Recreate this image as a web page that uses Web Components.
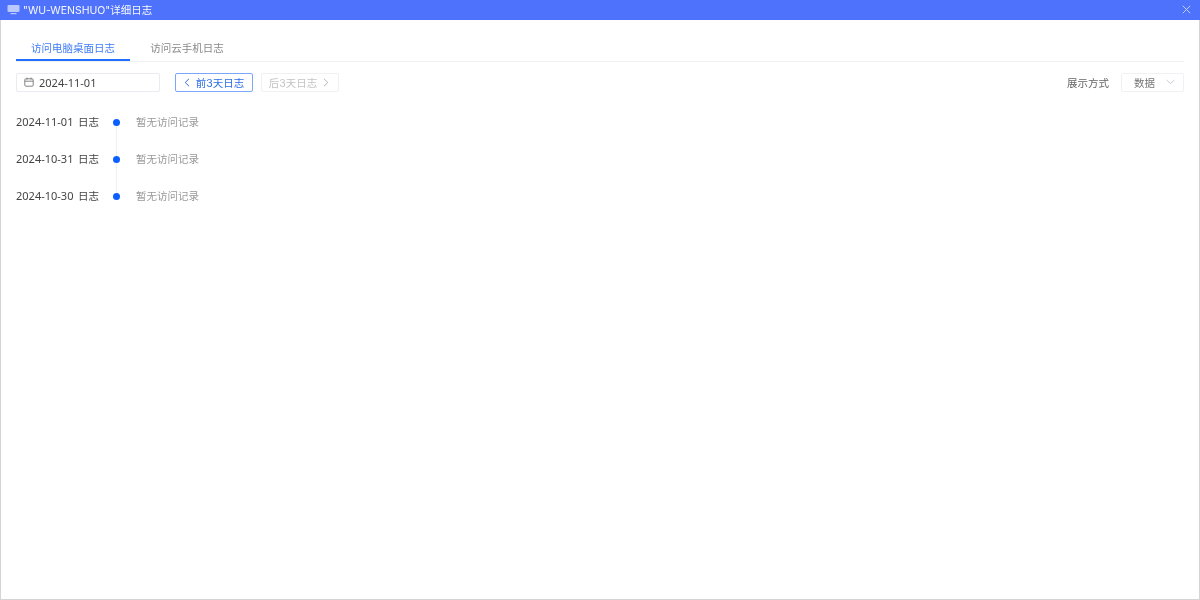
<!DOCTYPE html>
<html lang="zh"><head><meta charset="utf-8">
<style>
html,body{margin:0;height:100%;background:#fff}
body{font-family:Inter,"Noto Sans CJK SC",sans-serif;font-size:10.5px;overflow:hidden}
</style></head><body>
<log-window></log-window>
<template id="t-window"><style>
:host{display:flex;flex-direction:column;width:1200px;height:600px;box-sizing:border-box;border:1px solid #d4d4d4;border-top:0;background:#fff;color:#333;filter:blur(.3px)}
main{flex:1;display:flex;flex-direction:column;padding:20px 15px 0}
</style>
<title-bar></title-bar>
<main>
<log-tabs></log-tabs>
<log-toolbar></log-toolbar>
<log-timeline></log-timeline>
</main></template>

<template id="t-title"><style>
:host{display:flex;align-items:center;height:20px;box-sizing:border-box;padding:0 9px 1px 7px;background:#4f72fd;color:#fff;margin:0 -1px;font-size:10.5px;gap:3px;flex:none}
span{flex:1;opacity:.95}
svg{display:block}
</style>
<svg width="13" height="11" viewBox="0 0 13 11"><rect x="0.5" y="1" width="12" height="7" rx="1" fill="#b9c8ff"/><rect x="3.5" y="9" width="6" height="1.2" fill="#b9c8ff"/></svg>
<span>"WU-WENSHUO"详细日志</span>
<svg width="9" height="9" viewBox="0 0 9 9" fill="none" stroke="#cfd9ff" stroke-width=".9"><path d="M.8.8l7.4 7.4M8.2.8L.8 8.2"/></svg></template>

<template id="t-tabs"><style>
:host{display:flex;height:21px;border-bottom:1px solid #f0f1f4;flex:none;gap:20px}
div{width:114px;text-align:center;line-height:18px;height:20px;color:#8a8a8a;box-sizing:border-box}
.a{color:#3f7cf6;border-bottom:2px solid #1f6fff;height:21px}
.b{width:74px;white-space:nowrap}
</style><div class="a">访问电脑桌面日志</div><div class="b">访问云手机日志</div></template>

<template id="t-toolbar"><style>
:host{display:flex;align-items:center;height:20px;margin-top:10px;flex:none}
.date{display:flex;align-items:center;gap:5px;width:144px;height:19px;box-sizing:border-box;border:1px solid #e9ebf0;border-radius:2px;padding-left:7px;color:#444;font:11px "Noto Sans",sans-serif;white-space:nowrap}
.btn{display:flex;align-items:center;justify-content:center;gap:6px;width:78px;height:19px;box-sizing:border-box;border-radius:2px;border:1.5px solid #7aa7fb;color:#2e6ee6;margin-left:15px;white-space:nowrap}
.btn.off{border:1px solid #f0f1f4;color:#c4c4c4;margin-left:8px;padding-right:2px}
.sp{flex:1}
.lbl{color:#666;margin-right:12px}
.sel{display:flex;align-items:center;justify-content:space-between;width:63px;height:19px;box-sizing:border-box;border:1px solid #f0f1f4;border-radius:2px;padding:0 8px 0 12px;color:#777}
svg{display:block;flex:none}
</style>
<div class="date"><svg width="10" height="10" viewBox="0 0 10 10" fill="none" stroke="#777" stroke-width=".9"><rect x=".8" y="1.8" width="8.4" height="7.4" rx="1"/><path d="M.8 4.2h8.4M3 .6v2M7 .6v2"/></svg>2024-11-01</div>
<div class="btn"><svg width="6" height="9" viewBox="0 0 6 9" fill="none" stroke="#2e6ee6"><path d="M5 .8L1.2 4.5 5 8.2"/></svg>前3天日志</div>
<div class="btn off">后3天日志<svg width="6" height="9" viewBox="0 0 6 9" fill="none" stroke="#b5b5b5"><path d="M1 .8l3.8 3.7L1 8.2"/></svg></div>
<div class="sp"></div><div class="lbl">展示方式</div>
<div class="sel">数据<svg width="9" height="6" viewBox="0 0 9 6" fill="none" stroke="#c0c4cc" stroke-width=".9"><path d="M.6 1l3.9 3.6L8.4 1"/></svg></div></template>

<template id="t-timeline"><style>
:host{display:flex;flex-direction:column;margin-top:11px}
</style><log-row date="2024-11-01"></log-row><log-row date="2024-10-31"></log-row><log-row date="2024-10-30" last></log-row></template>

<template id="t-row"><style>
:host{display:flex;align-items:center;height:37px;position:relative;align-self:flex-start}
.d{width:95px;color:#444;white-space:nowrap;display:flex;align-items:center}
.d em{font:11px "Noto Sans",sans-serif;width:62px}
.n{width:10px;display:flex;justify-content:center;position:relative;align-self:stretch;align-items:center;margin-right:15px}
.n i{width:7px;height:7px;border-radius:50%;background:#0b5fff;position:relative;z-index:1;top:1px}
.n b{position:absolute;left:50%;margin-left:-.5px;top:19px;height:37px;width:1px;background:#eef0f4}
:host([last]) .n b{display:none}
.t{color:#999}
</style><div class="d"><em></em>日志</div><div class="n"><i></i><b></b></div><div class="t">暂无访问记录</div></template>

<script>
function def(name,id,init){customElements.define(name,class extends HTMLElement{constructor(){super();this.attachShadow({mode:'open'}).appendChild(document.getElementById(id).content.cloneNode(true));}connectedCallback(){if(init)init(this)}})}
def('title-bar','t-title');def('log-tabs','t-tabs');def('log-toolbar','t-toolbar');def('log-timeline','t-timeline');
def('log-row','t-row',e=>{e.shadowRoot.querySelector('em').textContent=e.getAttribute('date')});
def('log-window','t-window');
</script></body></html>
